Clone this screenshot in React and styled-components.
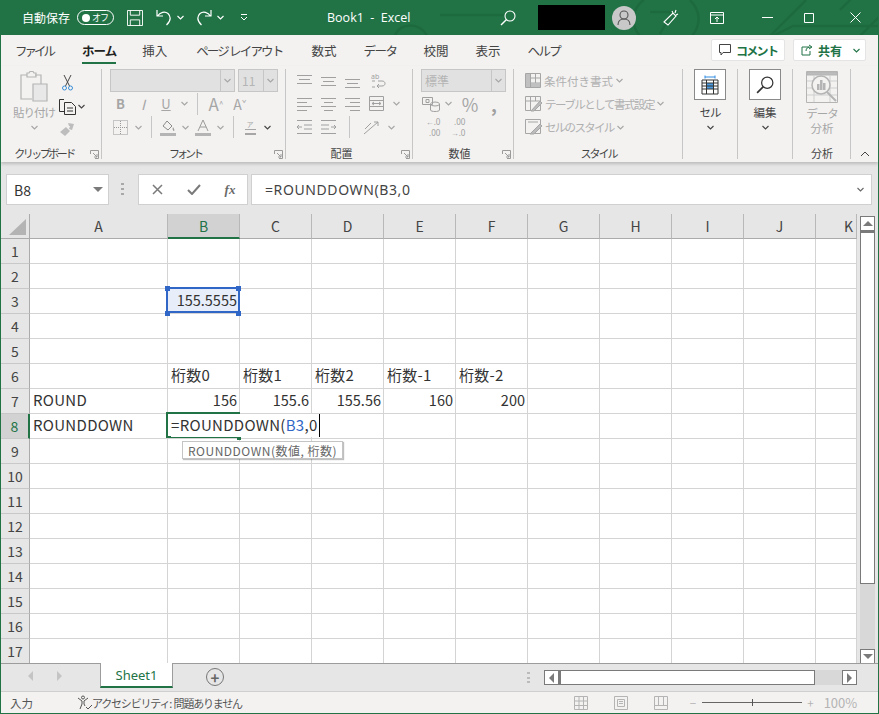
import React from 'react';
import styled, { createGlobalStyle } from 'styled-components';

const GREEN = '#217346';
const FONT = '"Noto Sans CJK JP", "Noto Sans", sans-serif';

const GlobalStyle = createGlobalStyle`
  html, body { margin: 0; padding: 0; background: #e6e6e6; }
  body { font-family: ${FONT}; overflow: hidden; }
  #root { width: 879px; height: 714px; }
`;

const Window = styled.div`
  width: 879px;
  height: 714px;
  box-sizing: border-box;
  border: 1px solid ${GREEN};
  border-top: 0;
  display: flex;
  flex-direction: column;
  overflow: hidden;
  background: #e6e6e6;
`;

/* title bar */
const TitleBar = styled.div`
  position: relative;
  height: 35px;
  flex: none;
  margin: 0 -1px;
  background: ${GREEN};
  color: #fff;
  display: flex;
  align-items: center;
  padding-left: 22px;
  font-size: 12px;
`;
const Pattern = styled.svg`
  position: absolute;
  left: 0;
  top: 0;
`;
const TitleItem = styled.span`
  position: relative;
  display: flex;
  align-items: center;
  flex: none;
  margin-left: ${p => p.$ml || 0}px;
`;
const Toggle = styled.span`
  width: 37px;
  height: 15px;
  border: 1px solid #fff;
  border-radius: 8px;
  display: flex;
  align-items: center;
  justify-content: space-between;
  padding: 0 5px 0 4px;
  box-sizing: border-box;
  font-size: 9px;
  letter-spacing: -1px;
  line-height: 1;
  &::before {
    content: '';
    width: 8px;
    height: 8px;
    border-radius: 50%;
    background: #fff;
  }
`;
const DocTitle = styled.span`
  font-size: 12.5px;
  white-space: pre;
  font-family: "Open Sans", sans-serif;
`;
const BlackBox = styled.span`
  width: 67px;
  height: 25px;
  background: #000;
`;
const Avatar = styled.span`
  width: 24px;
  height: 24px;
  border-radius: 50%;
  background: #c8c8c8;
  display: flex;
  align-items: center;
  justify-content: center;
`;

/* tabs */
const TabRow = styled.div`
  height: 31px;
  flex: none;
  background: #f3f2f1;
  display: flex;
  align-items: center;
  padding-left: 14px;
  position: relative;
`;
const Tab = styled.span`
  position: relative;
  font-size: 12.5px;
  line-height: 18px;
  letter-spacing: ${p => p.$ls || 0}px;
  margin-right: ${p => p.$mr || 29}px;
  color: ${p => (p.$active ? '#222' : '#444')};
  font-weight: ${p => (p.$active ? 700 : 400)};
  white-space: nowrap;
  ${p => p.$active && `
    &::after {
      content: '';
      position: absolute;
      left: 0;
      right: 0;
      bottom: -4px;
      height: 2px;
      background: ${GREEN};
    }
  `}
`;
const TabActions = styled.div`
  position: absolute;
  right: 12px;
  top: 4px;
  display: flex;
  gap: 8px;
`;
const ActionButton = styled.span`
  height: 22px;
  width: ${p => p.$w}px;
  box-sizing: border-box;
  background: #fff;
  border: 1px solid #e4e4e4;
  border-radius: 2px;
  color: ${GREEN};
  font-size: 12px;
  font-weight: 700;
  letter-spacing: ${p => p.$ls || 0}px;
  display: flex;
  align-items: center;
  gap: 5px;
  padding-left: 7px;
`;

/* ribbon */
const Ribbon = styled.div`
  height: 96px;
  flex: none;
  background: #f3f2f1;
  box-shadow: 0 2px 3px rgba(0, 0, 0, 0.18);
  display: flex;
  position: relative;
  z-index: 2;
`;
const Group = styled.div`
  position: relative;
  width: ${p => p.$w}px;
  flex: none;
  box-sizing: border-box;
  display: flex;
  flex-direction: column;
  &::after {
    content: '';
    position: absolute;
    right: 0;
    top: 3px;
    bottom: 3px;
    width: 1px;
    background: #c6c6c6;
  }
`;
const GroupBody = styled.div`
  flex: 1;
  display: flex;
  min-height: 0;
  padding-left: ${p => p.$pl || 0}px;
  padding-top: ${p => p.$pt || 3}px;
  box-sizing: border-box;
`;
const GroupLabel = styled.div`
  height: 21px;
  flex: none;
  box-sizing: border-box;
  padding-top: 3px;
  font-size: 11px;
  line-height: 18px;
  text-align: center;
  color: #444;
  letter-spacing: ${p => p.$ls || 0}px;
  padding-right: ${p => p.$pr || 0}px;
  white-space: nowrap;
`;
const Launcher = styled.svg`
  position: absolute;
  right: 3px;
  bottom: 3px;
`;
const Stack = styled.div`
  display: flex;
  flex-direction: column;
  align-items: ${p => p.$align || 'flex-start'};
  width: ${p => (p.$w ? `${p.$w}px` : 'auto')};
  flex: none;
  svg { flex: none; }
`;
const Row = styled.div`
  display: flex;
  align-items: center;
  height: ${p => p.$h || 24}px;
  flex: none;
  gap: ${p => p.$gap || 0}px;
`;
const Slot = styled.span`
  width: ${p => p.$w}px;
  height: 100%;
  flex: none;
  display: flex;
  align-items: center;
  justify-content: center;
  font-size: ${p => p.$fs || 13}px;
  color: ${p => p.$c || '#a6a6a6'};
`;
const VSep = styled.span`
  width: 1px;
  height: 22px;
  background: #c6c6c6;
  flex: none;
  margin: 0 ${p => p.$m || 4}px;
`;
const BigLabel = styled.div`
  font-size: 11.5px;
  line-height: 15px;
  color: ${p => p.$c || '#a6a6a6'};
  letter-spacing: ${p => p.$ls || 0}px;
  margin-top: ${p => p.$mt || 0}px;
  text-align: center;
  white-space: nowrap;
`;
const DisabledSelect = styled.div`
  width: ${p => p.$w}px;
  height: 23px;
  box-sizing: border-box;
  background: #e1e1e1;
  border: 1px solid #c6c6c6;
  display: flex;
  color: #b4b4b4;
  font-size: 12px;
  align-items: center;
  flex: none;
`;
const SelectText = styled.span`
  flex: 1;
  padding-left: 3px;
  overflow: hidden;
  white-space: nowrap;
`;
const SelectArrow = styled.span`
  width: 13px;
  height: 100%;
  border-left: 1px solid #c6c6c6;
  display: flex;
  align-items: center;
  justify-content: center;
  flex: none;
`;
const Sup = styled.sup`
  font-size: 8px;
  line-height: 1;
`;
const Phonetic = styled.span`
  display: flex;
  flex-direction: column;
  align-items: center;
  font-size: 7px;
  line-height: 8px;
  color: #a6a6a6;
  &::after {
    content: '';
    width: 11px;
    height: 6px;
    margin-top: 1px;
    border-top: 1px solid #a6a6a6;
    border-bottom: 2px solid #a6a6a6;
    box-sizing: border-box;
  }
`;
const Decimal = styled.span`
  display: flex;
  flex-direction: column;
  align-items: flex-end;
  font-size: 8px;
  line-height: 11px;
  color: #a0a0a0;
  font-family: "Noto Sans", sans-serif;
`;
const StyleRow = styled.div`
  display: flex;
  align-items: center;
  height: ${p => p.$h || 24}px;
  gap: 3px;
  font-size: 11.5px;
  letter-spacing: ${p => p.$ls || 0}px;
  color: #b0b0b0;
  white-space: nowrap;
`;
const IconBox = styled.div`
  width: 32px;
  height: 31px;
  box-sizing: border-box;
  background: #fff;
  border: 1px solid #8a8a8a;
  display: flex;
  align-items: center;
  justify-content: center;
`;
const CollapseSlot = styled.div`
  flex: 1;
  display: flex;
  align-items: flex-end;
  justify-content: center;
  padding-bottom: 5px;
`;

/* formula bar */
const FormulaBar = styled.div`
  height: 52px;
  flex: none;
  display: flex;
  align-items: flex-start;
  padding: 12px 0 0 5px;
  box-sizing: border-box;
`;
const FormulaBox = styled.div`
  height: 31px;
  box-sizing: border-box;
  background: #fff;
  border: 1px solid #d0d0d0;
  display: flex;
  align-items: center;
  width: ${p => p.$w}px;
  flex: none;
  margin-left: ${p => p.$ml || 0}px;
`;
const NameText = styled.span`
  flex: 1;
  padding-left: 7px;
  font-size: 14px;
  color: #333;
`;
const FormulaText = styled.span`
  flex: 1;
  padding-left: 13px;
  font-size: 14px;
  letter-spacing: 0.6px;
  color: #444;
  font-family: "Noto Sans", sans-serif;
`;
const DotGrip = styled.span`
  width: 3px;
  margin-left: 12px;
  height: 13px;
  margin-top: 9px;
  background: repeating-linear-gradient(#a8a8a8 0 2px, transparent 2px 5px);
  flex: none;
`;
const FxSlot = styled.span`
  width: 36px;
  display: flex;
  justify-content: center;
  align-items: center;
  flex: none;
  color: #6a6a6a;
  font-family: "Liberation Serif", serif;
  font-style: italic;
  font-weight: 700;
  font-size: 13px;
`;

/* sheet */
const SheetArea = styled.div`
  display: flex;
  flex: none;
  height: 450px;
`;
const Sheet = styled.div`
  display: grid;
  grid-template-columns: 29px 138px repeat(9, 72px) 41px;
  grid-template-rows: repeat(18, 25px);
  width: 856px;
  height: 450px;
  flex: none;
  overflow: hidden;
  background: #fff;
`;
const Corner = styled.div`
  background: #e6e6e6;
  border-right: 1px solid #ababab;
  border-bottom: 1px solid #ababab;
  display: flex;
  align-items: flex-end;
  justify-content: flex-end;
  padding: 0 3px 3px 0;
  box-sizing: border-box;
  &::after {
    content: '';
    width: 0;
    height: 0;
    border-style: solid;
    border-width: 0 0 16px 17px;
    border-color: transparent transparent #b4b4b4 transparent;
  }
`;
const ColHead = styled.div`
  box-sizing: border-box;
  background: ${p => (p.$active ? '#d2d2d2' : '#e6e6e6')};
  border-right: 1px solid #b8b8b8;
  border-bottom: ${p => (p.$active ? `2px solid ${GREEN}` : '1px solid #ababab')};
  color: ${p => (p.$active ? GREEN : '#444')};
  font-size: 14px;
  display: flex;
  align-items: center;
  justify-content: ${p => (p.$end ? 'flex-end' : 'center')};
  padding-right: ${p => (p.$end ? 3 : 0)}px;
`;
const RowHead = styled.div`
  box-sizing: border-box;
  background: ${p => (p.$active ? '#d2d2d2' : '#e6e6e6')};
  border-right: ${p => (p.$active ? `2px solid ${GREEN}` : '1px solid #ababab')};
  border-bottom: 1px solid #c8c8c8;
  color: ${p => (p.$active ? GREEN : '#444')};
  font-size: 14px;
  display: flex;
  align-items: center;
  justify-content: center;
`;
const Cell = styled.div`
  position: relative;
  box-sizing: border-box;
  border-right: 1px solid #d4d4d4;
  border-bottom: 1px solid #d4d4d4;
  font-size: ${p => (p.$right ? 14.5 : 15)}px;
  letter-spacing: ${p => (p.$right ? 0 : 0.3)}px;
  color: #333;
  padding: 0 ${p => (p.$right ? 2 : 3)}px 3px 3px;
  display: flex;
  align-items: center;
  justify-content: ${p => (p.$right ? 'flex-end' : 'flex-start')};
  white-space: nowrap;
  ${p => p.$selected && 'z-index: 3;'}
`;
const RefCell = styled.span`
  position: absolute;
  inset: -2px -1px 0 -2px;
  border: 2px solid #3067c6;
  background: #e8eef9;
  box-sizing: border-box;
  z-index: 1;
`;
const RefText = styled.span`
  position: relative;
  z-index: 2;
`;
const Handle = styled.i`
  position: absolute;
  width: 5px;
  height: 5px;
  background: #3067c6;
  z-index: 3;
  ${p => (p.$t ? 'top: -3px;' : 'bottom: -3px;')}
  ${p => (p.$l ? 'left: -3px;' : 'right: -2px;')}
`;
const EditFrame = styled.span`
  position: absolute;
  inset: -2px -1px 0 -2px;
  border: 2px solid ${GREEN};
  border-right-width: 0;
  box-sizing: border-box;
  &::after {
    content: '';
    position: absolute;
    right: -1px;
    bottom: -4px;
    width: 4px;
    height: 4px;
    background: ${GREEN};
  }
`;
const Editor = styled.span`
  position: absolute;
  left: 3px;
  top: 0;
  height: 23px;
  background: #fff;
  display: flex;
  align-items: center;
  border-right: 1px solid #000;
  padding: 0 1px 2px 0;
  box-sizing: border-box;
  z-index: 4;
  color: #333;
`;
const RefToken = styled.span`
  color: #3067c6;
`;
const Tooltip = styled.span`
  position: absolute;
  left: 14px;
  top: 27px;
  height: 18px;
  padding: 0 5px;
  box-sizing: border-box;
  background: #fff;
  border: 1px solid #c4c4c4;
  box-shadow: 1px 1px 1px rgba(0, 0, 0, 0.25);
  font-size: 12px;
  letter-spacing: 0.5px;
  color: #666;
  display: flex;
  align-items: center;
  z-index: 5;
`;

/* scrollbars */
const VScroll = styled.div`
  margin: 2px 0 0 3px;
  width: 15px;
  height: 448px;
  flex: none;
  display: flex;
  flex-direction: column;
  background: #d8d8d8;
`;
const ScrollButton = styled.span`
  width: 15px;
  height: 15px;
  flex: none;
  background: #fff;
  border: 1px solid #7a7a7a;
  box-sizing: border-box;
  display: flex;
  align-items: center;
  justify-content: center;
`;
const VThumb = styled.span`
  height: 353px;
  flex: none;
  background: #fff;
  border: 1px solid #7a7a7a;
  border-top-width: 2px;
  box-sizing: border-box;
`;
const Fill = styled.span`
  flex: 1;
`;
const Arrow = styled.i`
  width: 0;
  height: 0;
  border-style: solid;
  ${p => p.$dir === 'up' && 'border-width: 0 5px 5px; border-color: transparent transparent #7a7a7a;'}
  ${p => p.$dir === 'down' && 'border-width: 5px 5px 0; border-color: #7a7a7a transparent transparent;'}
  ${p => p.$dir === 'left' && 'border-width: 5px 5px 5px 0; border-color: transparent #7a7a7a transparent transparent;'}
  ${p => p.$dir === 'right' && 'border-width: 5px 0 5px 5px; border-color: transparent transparent transparent #7a7a7a;'}
`;
const NavArrow = styled(Arrow)`
  border-color: ${p => (p.$dir === 'left'
    ? 'transparent #c4c4c4 transparent transparent'
    : 'transparent transparent transparent #c4c4c4')};
`;

const SheetTabs = styled.div`
  position: relative;
  height: 27px;
  flex: none;
  display: flex;
  align-items: flex-start;
  background: #e6e6e6;
  box-shadow: 0 -1px 0 #9c9c9c;
`;
const NavSlot = styled.span`
  width: 29px;
  height: 24px;
  margin-left: ${p => p.$ml || 0}px;
  flex: none;
  display: flex;
  align-items: center;
  justify-content: center;
`;
const SheetTab = styled.span`
  width: 73px;
  height: 25px;
  margin-top: -1px;
  margin-left: 26px;
  flex: none;
  box-sizing: border-box;
  background: #fff;
  border: 1px solid #9c9c9c;
  border-top: 0;
  border-bottom: 2px solid ${GREEN};
  color: ${GREEN};
  font-size: 13px;
  font-family: "Noto Sans", sans-serif;
  display: flex;
  align-items: center;
  justify-content: center;
`;
const AddSheet = styled.span`
  margin: 4px 0 0 33px;
  width: 16px;
  height: 16px;
  border: 1px solid #777;
  border-radius: 50%;
  color: #666;
  flex: none;
  display: flex;
  align-items: center;
  justify-content: center;
  font-size: 15px;
  font-weight: 700;
  line-height: 1;
`;
const TabGrip = styled.span`
  width: 3px;
  height: 11px;
  margin: 8px 0 0 ${p => p.$ml}px;
  flex: none;
  background: repeating-linear-gradient(#bbb 0 2px, transparent 2px 4.5px);
`;
const HScroll = styled.div`
  width: 313px;
  height: 15px;
  margin: 6px 0 0 14px;
  flex: none;
  display: flex;
  background: #d8d8d8;
`;
const HThumb = styled.span`
  width: 256px;
  flex: none;
  background: #fff;
  border: 1px solid #7a7a7a;
  border-left-width: 2px;
  box-sizing: border-box;
`;

/* status */
const StatusBar = styled.div`
  height: 22px;
  flex: none;
  background: #f3f2f1;
  border-top: 1px solid #cfcfcf;
  display: flex;
  align-items: center;
  font-size: 11.5px;
  color: #555;
  box-sizing: border-box;
`;
const StatusText = styled.span`
  margin-left: ${p => p.$ml || 0}px;
  color: ${p => p.$c || '#555'};
  font-size: ${p => p.$fs || 11.5}px;
  letter-spacing: ${p => p.$ls || 0}px;
  flex: none;
  display: flex;
  align-items: center;
  white-space: pre;
`;
const StatusIcon = styled.span`
  margin-left: ${p => p.$ml}px;
  display: flex;
  flex: none;
`;
const Slider = styled.span`
  position: relative;
  width: 100px;
  height: 1px;
  margin-left: 6px;
  background: #666;
  flex: none;
  &::after {
    content: '';
    position: absolute;
    left: 50px;
    top: -3px;
    width: 1px;
    height: 7px;
    background: #555;
  }
`;

/* drawings */
const Chevron = ({ c = '#a6a6a6', w = 7 }) => (
  <svg width={w} height="5" viewBox="0 0 7 5"><path d="M.5 1 3.500 4l3-3" fill="none" stroke={c} strokeWidth="1.100" /></svg>
);
const Launch = () => (
  <Launcher width="9" height="9" viewBox="0 0 9 9">
    <path d="M.5 4V.5h8v8H5M3 3l4 4M7 4v3H4" fill="none" stroke="#9a9a9a" />
  </Launcher>
);
const Lines = ({ rows, w = 15 }) => (
  <svg width={w} height="14" viewBox={`0 0 ${w} 14`}>
    {rows.map(([x1, x2, y], i) => <path key={i} d={`M${x1} ${y + .5}H${x2}`} stroke="#a0a0a0" />)}
  </svg>
);
const SaveIcon = () => (
  <svg width="16" height="16" viewBox="0 0 17 17" fill="none" stroke="#fff"><path d="M.5.5h16v16H.5zM3.500.5v5h10v-5M3.500 16.500v-6h10v6" /></svg>
);
const Undo = ({ flip }) => (
  <svg width="16" height="17" viewBox="0 0 16 17" fill="none" stroke="#fff" strokeWidth="1.200" style={flip ? { transform: 'scaleX(-1)' } : undefined}>
    <path d="M1 1v6h6M1.500 7C4 3 9 2 12 4.500c3 3 3 7-1.500 11.500" />
  </svg>
);
const Search = ({ c = '#fff', s = 16 }) => (
  <svg width={s} height={s} viewBox="0 0 16 16" fill="none" stroke={c} strokeWidth="1.100"><circle cx="10" cy="6" r="5" /><path d="M6.500 9.500 1 15" strokeWidth="1.500" /></svg>
);
const PasteIcon = () => (
  <svg width="28" height="31" viewBox="0 0 28 31" fill="none" stroke="#b4b4b4" strokeWidth="1.200">
    <path d="M7 4H1v24h11" /><path d="M15 4h6v9" /><path d="M7 2h2l1-1.500h3L14 2h2v4H7z" /><path d="M13 13h14v17H13z" fill="#e8e8e8" />
  </svg>
);
const Scissors = () => (
  <svg width="11" height="16" viewBox="0 0 11 16" fill="none"><path d="M2 0l5.500 11M9 0 3.500 11" stroke="#444" /><circle cx="2.500" cy="13" r="2" stroke="#3c8fd6" /><circle cx="8.500" cy="13" r="2" stroke="#3c8fd6" /></svg>
);
const CopyIcon = () => (
  <svg width="17" height="16" viewBox="0 0 17 16" fill="none" stroke="#333"><path d="M5 .5H.5v12H5" /><path d="M5.500 3.500h7l4 4v8h-11zM8 9h6M8 12h6" /></svg>
);
const Painter = () => (
  <svg width="16" height="15" viewBox="0 0 16 15" fill="#bdbdbd"><path d="M9 1l6 1-2 6-3-1 1-3-1 0zM1 10l6-5 4 4-5 5z" /></svg>
);
const BorderIcon = () => (
  <svg width="15" height="15" viewBox="0 0 15 15" stroke="#999" strokeDasharray="1 1" fill="none"><path d="M.5.5h14v14H.5zM7.500 1v13M1 7.500h13" /></svg>
);
const FillIcon = () => (
  <svg width="16" height="17" viewBox="0 0 16 17" fill="none"><path d="M3 7l4-5 5 5-4 4z" stroke="#8c8c8c" /><path d="M13 8c1 2 2 3 1 4-1 0-2-2-1-4z" fill="#9c9c9c" /><path d="M0 14h16v3H0z" fill="#b4b4b4" /></svg>
);
const FontColor = () => (
  <svg width="16" height="17" viewBox="0 0 16 17" fill="none"><path d="M3 12 8 1l5 11M5 8h6" stroke="#9c9c9c" /><path d="M0 14h16v3H0z" fill="#b4b4b4" /></svg>
);
const WrapIcon = () => (
  <svg width="15" height="16" viewBox="0 0 15 16" fill="none" stroke="#a0a0a0"><path d="M1 8h3M1 14h3M7 8h4c4 0 4 5 0 5H6m2-2-2 2 2 2" /><text x="0" y="6" fontSize="7" fill="#a0a0a0" stroke="none" fontFamily="Noto Sans">ab</text></svg>
);
const MergeIcon = () => (
  <svg width="15" height="15" viewBox="0 0 15 15" fill="none" stroke="#a0a0a0"><path d="M.5.5h14v14H.5zM.5 4.500h14M.5 10.500h14M3 7.500h9M3 7.500 5 6M3 7.500 5 9M12 7.500 10 6M12 7.500 10 9" /></svg>
);
const Indent = ({ flip }) => (
  <svg width="15" height="14" viewBox="0 0 15 14" fill="none" stroke="#a0a0a0" style={flip ? { transform: 'scaleX(-1)' } : undefined}>
    <path d="M0 .5h15M0 13.500h15M7 5h8M7 9h8M5 7H0m2-2-2 2 2 2" />
  </svg>
);
const AngleIcon = () => (
  <svg width="16" height="15" viewBox="0 0 16 15" fill="none" stroke="#a0a0a0"><path d="M1 14 15 2M15 2h-4M15 2v4M2 9l6-6" /></svg>
);
const Currency = () => (
  <svg width="18" height="16" viewBox="0 0 18 16" fill="none" stroke="#a0a0a0"><path d="M.5 1.500h10v7H.5zM4 3.500h3v3H4z" /><ellipse cx="13" cy="8" rx="4.500" ry="2" /><path d="M8.500 8v6c0 2 9 2 9 0V8" /></svg>
);
const StyleCond = () => (
  <svg width="16" height="15" viewBox="0 0 16 15" fill="none" stroke="#a6a6a6"><path d="M.5.5h15v14H.5zM5.500 1v13M10.500 1v13M1 5h14M1 10h14" /><path d="M1 1h4v13H1zM6 10h9v4H6z" fill="#c0c0c0" stroke="none" /></svg>
);
const StyleTable = () => (
  <svg width="17" height="16" viewBox="0 0 17 16" fill="none" stroke="#a6a6a6"><path d="M.5.5h15v14H.5zM.5 5h15M5.500 1v13M10.500 1v4" /><path d="M6 15 15 5l2 2-8 8z" fill="#bcbcbc" /></svg>
);
const StyleCell = () => (
  <svg width="17" height="16" viewBox="0 0 17 16" fill="none" stroke="#a6a6a6"><path d="M.5.5h15v14H.5zM3 3h10" /><path d="M5 15 15 5l2 2-8 8z" fill="#bcbcbc" /></svg>
);
const CellsIcon = () => (
  <svg width="18" height="20" viewBox="0 0 18 20" fill="none"><path d="M1 5h16v14H1z" stroke="#333" /><path d="M5.500 8h7v6h-7z" fill="#4a9be0" /><path d="M1 8h16M1 11h16M1 14h16M5.500 5v14M12.500 5v14" stroke="#333" /><path d="M4 2h10M4 .5v3M14 .5v3" stroke="#2f8be0" /></svg>
);
const AnalysisIcon = () => (
  <svg width="32" height="32" viewBox="0 0 32 32" fill="none" stroke="#b4b4b4">
    <path d="M.5.5h31v31H.5z" /><path d="M1 1h30v3H1z" fill="#bcbcbc" />
    <path d="M1 10h30M1 17h30M1 24h30M8 4v27M24 4v27" stroke="#cfcfcf" />
    <circle cx="15" cy="14" r="9" fill="#f3f2f1" strokeWidth="1.500" />
    <path d="M11 13h2.500v6H11zM14 9h2.500v10H14zM17 12h2.500v7H17z" fill="#b4b4b4" stroke="none" />
    <path d="M21 21l9 9" strokeWidth="2" />
  </svg>
);

const COLUMNS = ['A', 'B', 'C', 'D', 'E', 'F', 'G', 'H', 'I', 'J', 'K'];

const CELLS = {
  B3: { refCell: true, text: '155.5555', right: true },
  B6: { text: '桁数0' },
  C6: { text: '桁数1' },
  D6: { text: '桁数2' },
  E6: { text: '桁数-1' },
  F6: { text: '桁数-2' },
  A7: { text: 'ROUND' },
  B7: { text: '156', right: true },
  C7: { text: '155.6', right: true },
  D7: { text: '155.56', right: true },
  E7: { text: '160', right: true },
  F7: { text: '200', right: true },
  A8: { text: 'ROUNDDOWN' },
  B8: { editing: true },
};

const renderCell = (key) => {
  const cell = CELLS[key];
  if (!cell) return <Cell key={key} />;
  if (cell.refCell) {
    return (
      <Cell key={key} $right $selected>
        <RefCell />
        <Handle $t $l /><Handle $t /><Handle $l /><Handle />
        <RefText>{cell.text}</RefText>
      </Cell>
    );
  }
  if (cell.editing) {
    return (
      <Cell key={key} $selected>
        <EditFrame />
        <Editor>=ROUNDDOWN(<RefToken>B3</RefToken>,0</Editor>
        <Tooltip>ROUNDDOWN(数値, 桁数)</Tooltip>
      </Cell>
    );
  }
  return <Cell key={key} $right={cell.right}>{cell.text}</Cell>;
};

const App = () => {
  const rows = Array.from({ length: 17 }, (_, i) => i + 1);

  return (
    <Window>
      <GlobalStyle />
      <TitleBar>
        <Pattern width="879" height="35" viewBox="0 0 879 35" fill="none" stroke="#1d6a3f" strokeWidth="2.500">
          <path d="M440 15H505M395 36c4-14 26-14 32 0M640 36c-10-12-8-28 4-36M690 0c10 10 12 24 2 36M650 12h22l-12 22M773 36l20-10h86M770 36l36-36M860 36l19-19M840 10l14-14" />
        </Pattern>
        <TitleItem>自動保存</TitleItem>
        <TitleItem $ml={7}><Toggle>オフ</Toggle></TitleItem>
        <TitleItem $ml={13}><SaveIcon /></TitleItem>
        <TitleItem $ml={13}><Undo /></TitleItem>
        <TitleItem $ml={5}><Chevron c="#fff" /></TitleItem>
        <TitleItem $ml={12}><Undo flip /></TitleItem>
        <TitleItem $ml={5}><Chevron c="#fff" /></TitleItem>
        <TitleItem $ml={16}>
          <svg width="8" height="7" viewBox="0 0 8 7" fill="none" stroke="#fff"><path d="M1 .5h6M1 3l3 3 3-3" /></svg>
        </TitleItem>
        <TitleItem $ml={79}><DocTitle>Book1  -  Excel</DocTitle></TitleItem>
        <TitleItem $ml={89}><Search /></TitleItem>
        <TitleItem $ml={22}><BlackBox /></TitleItem>
        <TitleItem $ml={7}>
          <Avatar>
            <svg width="14" height="15" viewBox="0 0 14 15" fill="none" stroke="#555" strokeWidth="1.100"><circle cx="7" cy="5" r="4" /><path d="M1 15c0-4 2-6 6-6s6 2 6 6" /></svg>
          </Avatar>
        </TitleItem>
        <TitleItem $ml={27}>
          <svg width="16" height="18" viewBox="0 0 16 18" fill="none" stroke="#fff" strokeWidth="1.100"><path d="M1 13 10 4l3 3-8 9zM9 2l1 2M13 1l-1 3M15 5l-2 1" /></svg>
        </TitleItem>
        <TitleItem $ml={31}>
          <svg width="14" height="12" viewBox="0 0 14 12" fill="none" stroke="#fff"><path d="M.5.5h13v11H.5zM.5 3h13M7 10V5M5 7l2-2 2 2" /></svg>
        </TitleItem>
        <TitleItem $ml={38}><svg width="11" height="1"><path d="M0 .5h11" stroke="#fff" /></svg></TitleItem>
        <TitleItem $ml={31}><svg width="10" height="10" viewBox="0 0 10 10" fill="none" stroke="#fff"><path d="M.5.5h9v9h-9z" /></svg></TitleItem>
        <TitleItem $ml={36}><svg width="11" height="11" viewBox="0 0 11 11" fill="none" stroke="#fff"><path d="M.5.5l10 10M10.500.5l-10 10" /></svg></TitleItem>
      </TitleBar>

      <TabRow>
        <Tab $ls={-3}>ファイル</Tab>
        <Tab $active $ls={-1} $mr={26}>ホーム</Tab>
        <Tab>挿入</Tab>
        <Tab $ls={-1.8}>ページ レイアウト</Tab>
        <Tab $mr={27}>数式</Tab>
        <Tab $ls={-1.5} $mr={27}>データ</Tab>
        <Tab $mr={27}>校閲</Tab>
        <Tab $mr={27}>表示</Tab>
        <Tab $ls={-1.7}>ヘルプ</Tab>
        <TabActions>
          <ActionButton $w={74} $ls={-1.7}>
            <svg width="12" height="12" viewBox="0 0 12 12" fill="none" stroke="#444"><path d="M.5.5h11v8H4L2 11V8.500H.5z" /></svg>
            コメント
          </ActionButton>
          <ActionButton $w={73}>
            <svg width="12" height="12" viewBox="0 0 12 12" fill="none" stroke={GREEN}><path d="M8 3H1v8h8V7M5 7c0-3 2-4 5-4M8 1l3 2-3 2" /></svg>
            共有
            <Slot $w={18}><Chevron c={GREEN} /></Slot>
          </ActionButton>
        </TabActions>
      </TabRow>

      <Ribbon>
        <Group $w={101}>
          <GroupBody $pl={11} $pt={5}>
            <Stack $align="center" $w={44}>
              <PasteIcon />
              <BigLabel $ls={-1} $mt={3}>貼り付け</BigLabel>
              <Row $h={14}><Chevron /></Row>
            </Stack>
            <Stack>
              <Row $h={24}><Slot $w={22}><Scissors /></Slot></Row>
              <Row $h={23}><Slot $w={22}><CopyIcon /></Slot><Chevron c="#444" /></Row>
              <Row $h={23}><Slot $w={22}><Painter /></Slot></Row>
            </Stack>
          </GroupBody>
          <GroupLabel $pr={15} $ls={-2.5}>クリップボード</GroupLabel>
          <Launch />
        </Group>

        <Group $w={184}>
          <GroupBody $pl={8}>
            <Stack>
              <Row $gap={3} $h={23}>
                <DisabledSelect $w={125}><SelectText /><SelectArrow><Chevron /></SelectArrow></DisabledSelect>
                <DisabledSelect $w={40}><SelectText>11</SelectText><SelectArrow><Chevron /></SelectArrow></DisabledSelect>
              </Row>
              <Row $h={23}>
                <Slot $w={21} $fs={13}><b>B</b></Slot>
                <Slot $w={24} $fs={14}><i>I</i></Slot>
                <Slot $w={22} $fs={13}><u>U</u></Slot>
                <Slot $w={14}><Chevron /></Slot>
                <VSep $m={6} />
                <Slot $w={24} $fs={17}>A<Sup>^</Sup></Slot>
                <Slot $w={24} $fs={14}>A<Sup>ˇ</Sup></Slot>
              </Row>
              <Row $h={24}>
                <Slot $w={21}><BorderIcon /></Slot>
                <Slot $w={14}><Chevron /></Slot>
                <VSep $m={6} />
                <Slot $w={20}><FillIcon /></Slot>
                <Slot $w={14}><Chevron /></Slot>
                <Slot $w={22}><FontColor /></Slot>
                <Slot $w={13}><Chevron /></Slot>
                <VSep $m={6} />
                <Slot $w={20}><Phonetic>ア</Phonetic></Slot>
                <Slot $w={14}><Chevron c="#444" /></Slot>
              </Row>
            </Stack>
          </GroupBody>
          <GroupLabel $pr={18} $ls={-3}>フォント</GroupLabel>
          <Launch />
        </Group>

        <Group $w={127}>
          <GroupBody $pl={11}>
            <Stack>
              <Row $gap={9} $h={23}>
                <Lines rows={[[0, 15, 1], [2, 13, 5], [0, 15, 9]]} />
                <Lines rows={[[0, 15, 3], [2, 13, 7], [0, 15, 11]]} />
                <Lines rows={[[0, 15, 5], [2, 13, 9], [0, 15, 13]]} />
                <Slot $w={19}><WrapIcon /></Slot>
              </Row>
              <Row $gap={9} $h={23}>
                <Lines rows={[[0, 15, 1], [0, 10, 5], [0, 15, 9], [0, 10, 13]]} />
                <Lines rows={[[0, 15, 1], [3, 12, 5], [0, 15, 9], [3, 12, 13]]} />
                <Lines rows={[[0, 15, 1], [5, 15, 5], [0, 15, 9], [5, 15, 13]]} />
                <MergeIcon />
                <Chevron />
              </Row>
              <Row $gap={9} $h={24}>
                <Indent />
                <Indent flip />
                <VSep $m={0} />
                <AngleIcon />
                <Chevron />
              </Row>
            </Stack>
          </GroupBody>
          <GroupLabel $pr={16}>配置</GroupLabel>
          <Launch />
        </Group>

        <Group $w={101}>
          <GroupBody $pl={8}>
            <Stack>
              <Row $h={23}><DisabledSelect $w={85}><SelectText>標準</SelectText><SelectArrow><Chevron /></SelectArrow></DisabledSelect></Row>
              <Row $h={23}>
                <Slot $w={19}><Currency /></Slot>
                <Slot $w={16}><Chevron /></Slot>
                <Slot $w={28} $fs={18}>%</Slot>
                <Slot $w={20} $fs={18} $c="#a0a0a0"><b>,</b></Slot>
              </Row>
              <Row $h={24}>
                <Slot $w={24}><Decimal><span>←.0</span><span>.00</span></Decimal></Slot>
                <Slot $w={26}><Decimal><span>.00</span><span>→.0</span></Decimal></Slot>
              </Row>
            </Stack>
          </GroupBody>
          <GroupLabel $pr={8}>数値</GroupLabel>
          <Launch />
        </Group>

        <Group $w={169}>
          <GroupBody $pl={11}>
            <Stack>
              <StyleRow $h={23}><StyleCond />条件付き書式 <Chevron /></StyleRow>
              <StyleRow $h={23} $ls={-1.5}><StyleTable />テーブルとして書式設定 <Chevron /></StyleRow>
              <StyleRow $ls={-1.7}><StyleCell />セルのスタイル <Chevron /></StyleRow>
            </Stack>
          </GroupBody>
          <GroupLabel $ls={-2}>スタイル</GroupLabel>
        </Group>

        <Group $w={55}>
          <GroupBody $pl={11}>
            <Stack $align="center" $w={32}>
              <IconBox><CellsIcon /></IconBox>
              <BigLabel $c="#444" $mt={5} $ls={-1}>セル</BigLabel>
              <Row $h={14}><Chevron c="#444" /></Row>
            </Stack>
          </GroupBody>
          <GroupLabel />
        </Group>

        <Group $w={55}>
          <GroupBody $pl={11}>
            <Stack $align="center" $w={32}>
              <IconBox><Search c="#333" s={18} /></IconBox>
              <BigLabel $c="#444" $mt={5}>編集</BigLabel>
              <Row $h={14}><Chevron c="#444" /></Row>
            </Stack>
          </GroupBody>
          <GroupLabel />
        </Group>

        <Group $w={58}>
          <GroupBody $pl={13} $pt={5}>
            <Stack $align="center" $w={32}>
              <AnalysisIcon />
              <BigLabel $mt={3} $ls={-1}>データ</BigLabel>
              <BigLabel>分析</BigLabel>
            </Stack>
          </GroupBody>
          <GroupLabel>分析</GroupLabel>
        </Group>

        <CollapseSlot>
          <svg width="10" height="6" viewBox="0 0 10 6" fill="none" stroke="#444"><path d="M1 5l4-4 4 4" /></svg>
        </CollapseSlot>
      </Ribbon>

      <FormulaBar>
        <FormulaBox $w={103}>
          <NameText>B8</NameText>
          <Slot $w={20}><Arrow $dir="down" /></Slot>
        </FormulaBox>
        <DotGrip />
        <FormulaBox $w={110} $ml={14}>
          <Slot $w={37}>
            <svg width="11" height="11" viewBox="0 0 11 11" fill="none" stroke="#7a7a7a" strokeWidth="1.500"><path d="M1 1l9 9M10 1l-9 9" /></svg>
          </Slot>
          <Slot $w={36}>
            <svg width="14" height="11" viewBox="0 0 14 11" fill="none" stroke="#7a7a7a" strokeWidth="2"><path d="M1 6l4 4 8-9" /></svg>
          </Slot>
          <FxSlot>fx</FxSlot>
        </FormulaBox>
        <FormulaBox $w={621} $ml={3}>
          <FormulaText>=ROUNDDOWN(B3,0</FormulaText>
          <Slot $w={22}><Chevron c="#666" w={9} /></Slot>
        </FormulaBox>
      </FormulaBar>

      <SheetArea>
        <Sheet>
          <Corner />
          {COLUMNS.map(col => (
            <ColHead key={col} $active={col === 'B'} $end={col === 'K'}>{col}</ColHead>
          ))}
          {rows.map(r => (
            <React.Fragment key={r}>
              <RowHead $active={r === 8}>{r}</RowHead>
              {COLUMNS.map(col => renderCell(`${col}${r}`))}
            </React.Fragment>
          ))}
        </Sheet>
        <VScroll>
          <ScrollButton><Arrow $dir="up" /></ScrollButton>
          <VThumb />
          <Fill />
          <ScrollButton><Arrow $dir="down" /></ScrollButton>
        </VScroll>
      </SheetArea>

      <SheetTabs>
        <NavSlot $ml={15}><NavArrow $dir="left" /></NavSlot>
        <NavSlot><NavArrow $dir="right" /></NavSlot>
        <SheetTab>Sheet1</SheetTab>
        <AddSheet>+</AddSheet>
        <TabGrip $ml={303} />
        <HScroll>
          <ScrollButton><Arrow $dir="left" /></ScrollButton>
          <HThumb />
          <Fill />
          <ScrollButton><Arrow $dir="right" /></ScrollButton>
        </HScroll>
      </SheetTabs>

      <StatusBar>
        <StatusText $ml={9}>入力</StatusText>
        <StatusIcon $ml={44}>
          <svg width="15" height="15" viewBox="0 0 15 15" fill="none" stroke="#555"><circle cx="6" cy="2.500" r="1.500" /><path d="M1 3l4 3v3l-2 5M11 3 7 6v3l1 2M9 12l2 2 4-4" /></svg>
        </StatusIcon>
        <StatusText $fs={11} $ls={-1.2}>アクセシビリティ:  問題ありません</StatusText>
        <StatusIcon $ml={332}>
          <svg width="14" height="14" viewBox="0 0 14 14" fill="none" stroke="#b4b4b4"><path d="M.5.500h13v13H.5zM5 1v12M9.500 1v12M1 5h12M1 9.500h12" /></svg>
        </StatusIcon>
        <StatusIcon $ml={26}>
          <svg width="14" height="14" viewBox="0 0 14 14" fill="none" stroke="#b4b4b4"><path d="M.5.500h13v13H.5zM3.500 3.500h7v7h-7zM5 5.500h4M5 7.500h4" /></svg>
        </StatusIcon>
        <StatusIcon $ml={26}>
          <svg width="14" height="14" viewBox="0 0 14 14" fill="none" stroke="#b4b4b4"><path d="M.5.500h13v13H.5zM.5 9.500h13M4.500 1v8M9.500 1v8" /></svg>
        </StatusIcon>
        <StatusText $ml={22} $c="#b4b4b4">−</StatusText>
        <Slider />
        <StatusText $ml={5} $c="#b4b4b4">+</StatusText>
        <StatusText $ml={10} $c="#b4b4b4" $fs={13}>100%</StatusText>
      </StatusBar>
    </Window>
  );
};

export default App;
